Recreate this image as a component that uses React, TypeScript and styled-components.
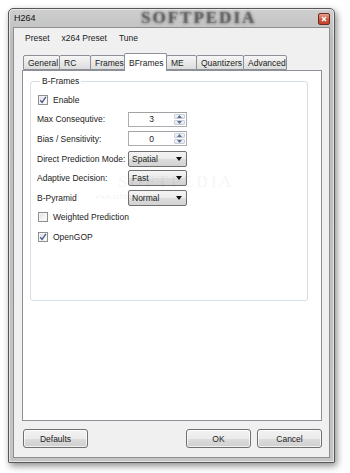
import React from "react";
import styled, { createGlobalStyle } from "styled-components";

const GlobalStyle = createGlobalStyle`
  html, body { margin: 0; padding: 0; background: #ffffff; }
  body {
    font-family: "Liberation Sans", Arial, sans-serif;
    font-size: 8.5px;
    color: #1b1b1b;
  }
  * { box-sizing: border-box; }
`;

const Page = styled.div`
  width: 350px;
  height: 473px;
  padding: 8px 0 0 8px;
  overflow: hidden;
`;

const Window = styled.div`
  width: 327px;
  height: 455px;
  border: 1px solid #575757;
  border-radius: 5px 5px 1px 1px;
  background: linear-gradient(#cfcfcf, #bdbdbd 30px, #c4c4c4);
  box-shadow: 2px 3px 7px rgba(0, 0, 0, 0.45), inset 0 0 0 1px rgba(255,255,255,0.55);
  padding: 0 4px 4px 4px;
  display: flex;
  flex-direction: column;
`;

const TitleBar = styled.div`
  position: relative;
  height: 18px;
  display: flex;
  align-items: center;
  padding-left: 1px;
  font-size: 9px;
  color: #111;
  overflow: hidden;
`;

const TitleWatermark = styled.span`
  position: absolute;
  left: 128px;
  top: -1px;
  font-family: "Liberation Serif", serif;
  font-weight: bold;
  font-size: 17px;
  letter-spacing: 2px;
  color: rgba(70, 70, 70, 0.3);
  text-shadow: 0 0 3px rgba(40, 40, 40, 0.8);
`;

const CloseButton = styled.div`
  position: absolute;
  right: 0;
  top: 4px;
  width: 12px;
  height: 12px;
  border: 1px solid #6b2b22;
  border-radius: 2px;
  background: linear-gradient(#e8a190, #d2553c 55%, #c0442c);
  display: flex;
  align-items: center;
  justify-content: center;
`;

const Client = styled.div`
  flex: 1;
  background: #f0f0f0;
  border: 1px solid #8e8e8e;
  display: flex;
  flex-direction: column;
  position: relative;
`;

const MenuBar = styled.div`
  height: 19px;
  display: flex;
  align-items: center;
  gap: 12px;
  padding-left: 11px;
`;

const MenuItem = styled.span``;

const TabStrip = styled.div`
  margin: 6px 0 0 8px;
  height: 17px;
  display: flex;
  align-items: flex-end;
  padding-left: 1px;
  position: relative;
  z-index: 1;
`;

const Tab = styled.div<{ $w: number; $active?: boolean }>`
  width: ${(p) => p.$w}px;
  height: ${(p) => (p.$active ? 18 : 15)}px;
  margin-left: -1px;
  margin-bottom: ${(p) => (p.$active ? -1 : 0)}px;
  padding: ${(p) => (p.$active ? "1px" : "0")} 0 0 4px;
  border: 1px solid #8d9096;
  border-bottom: ${(p) => (p.$active ? "none" : "1px solid #8d9096")};
  border-radius: 2px 2px 0 0;
  background: ${(p) =>
    p.$active ? "#ffffff" : "linear-gradient(#f6f6f6, #e9e9e9 50%, #dcdcdc)"};
  display: flex;
  align-items: center;
  white-space: nowrap;
  position: relative;
  z-index: ${(p) => (p.$active ? 2 : 1)};
  &:first-child { margin-left: 0; }
`;

const Panel = styled.div`
  margin: 0 7px 0 8px;
  height: 351px;
  background: #ffffff;
  border: 1px solid #8d9096;
  padding: 5px 13px 0 7px;
  position: relative;
`;

const Group = styled.fieldset`
  margin: 0;
  height: 225px;
  border: 1px solid #d5dfe5;
  border-radius: 3px;
  padding: 3px 0 0 6px;
`;

const Legend = styled.legend`
  margin-left: 3px;
  padding: 0 2px;
  line-height: 11px;
`;

const Rows = styled.div`
  display: flex;
  flex-direction: column;
`;

const Row = styled.div`
  height: 19.6px;
  display: flex;
  align-items: center;
`;

const Label = styled.span`
  width: 91px;
  white-space: nowrap;
`;

const CheckRow = styled(Row)`
  gap: 5px;
  padding-left: 1px;
`;

const CheckBox = styled.span`
  width: 10px;
  height: 10px;
  border: 1px solid #8e8f8f;
  background: linear-gradient(135deg, #dcdcdc, #f6f6f6 60%, #ffffff);
  box-shadow: inset 0 0 0 1px #f4f4f4;
  display: flex;
  align-items: center;
  justify-content: center;
`;

const SpinBox = styled.div`
  width: 59px;
  height: 15px;
  border: 1px solid #abadb3;
  border-top-color: #a0a2a8;
  background: #ffffff;
  display: flex;
  align-items: stretch;
`;

const SpinText = styled.span`
  flex: 1;
  display: flex;
  align-items: center;
  justify-content: center;
`;

const SpinButtons = styled.div`
  width: 12px;
  display: flex;
  flex-direction: column;
  gap: 1px;
  padding: 1px 1px 1px 0;
`;

const SpinButton = styled.div`
  flex: 1;
  border: 1px solid #c9d0da;
  border-radius: 1px;
  background: linear-gradient(#f5f7fa, #e1e6ee);
  display: flex;
  align-items: center;
  justify-content: center;
`;

const Combo = styled.div`
  width: 59px;
  height: 16px;
  border: 1px solid #707070;
  border-radius: 2px;
  background: linear-gradient(#f4f4f4, #ebebeb 50%, #dddddd 51%, #d2d2d2);
  display: flex;
  align-items: center;
  justify-content: space-between;
  padding: 0 4px 0 3px;
`;

const Arrow = styled.span`
  width: 0;
  height: 0;
  border-left: 3.5px solid transparent;
  border-right: 3.5px solid transparent;
  border-top: 4px solid #111;
`;

const ButtonBar = styled.div`
  margin: 8px 7px 0 9px;
  display: flex;
  gap: 6px;
`;

const Spacer = styled.div`
  flex: 1;
`;

const PushButton = styled.div`
  width: 65px;
  height: 19px;
  border: 1px solid #707070;
  border-radius: 3px;
  background: linear-gradient(#f2f2f2, #ebebeb 50%, #dddddd 51%, #cfcfcf);
  box-shadow: inset 0 0 0 1px rgba(255, 255, 255, 0.7);
  display: flex;
  align-items: center;
  justify-content: center;
`;

const Watermark = styled.div`
  position: absolute;
  left: 95px;
  top: 101px;
  font-family: "Liberation Serif", serif;
  font-weight: bold;
  font-size: 17px;
  letter-spacing: 2px;
  color: rgba(0, 0, 0, 0.05);
  pointer-events: none;
`;

const WatermarkUrl = styled.div`
  position: absolute;
  left: 72px;
  top: 121px;
  font-family: "Liberation Serif", serif;
  font-size: 7.5px;
  color: rgba(0, 0, 0, 0.09);
  pointer-events: none;
`;

const Check = () => (
  <svg width="8" height="8" viewBox="0 0 8 8">
    <path d="M1.2 4.2 L3.1 6.4 L6.9 0.9" fill="none" stroke="#4a5d92" strokeWidth="1.4" />
  </svg>
);

const SpinArrow = ({ up }: { up?: boolean }) => (
  <svg width="5" height="3" viewBox="0 0 5 3">
    <path d={up ? "M0 3 L2.5 0 L5 3 Z" : "M0 0 L2.5 3 L5 0 Z"} fill="#5a6e92" />
  </svg>
);

const tabs: { name: string; w: number; active?: boolean }[] = [
  { name: "General", w: 37 },
  { name: "RC", w: 32 },
  { name: "Frames", w: 35 },
  { name: "BFrames", w: 43, active: true },
  { name: "ME", w: 31 },
  { name: "Quantizers", w: 48 },
  { name: "Advanced", w: 44 },
];

const Spin = ({ value }: { value: string }) => (
  <SpinBox>
    <SpinText>{value}</SpinText>
    <SpinButtons>
      <SpinButton>
        <SpinArrow up />
      </SpinButton>
      <SpinButton>
        <SpinArrow />
      </SpinButton>
    </SpinButtons>
  </SpinBox>
);

export default function App() {
  return (
    <>
      <GlobalStyle />
      <Page>
        <Window>
          <TitleBar>
            H264
            <TitleWatermark>SOFTPEDIA</TitleWatermark>
            <CloseButton>
              <svg width="6" height="6" viewBox="0 0 6 6">
                <path d="M1 1 L5 5 M5 1 L1 5" stroke="#fff" strokeWidth="1.5" />
              </svg>
            </CloseButton>
          </TitleBar>
          <Client>
            <MenuBar>
              <MenuItem>Preset</MenuItem>
              <MenuItem>x264 Preset</MenuItem>
              <MenuItem>Tune</MenuItem>
            </MenuBar>
            <TabStrip>
              {tabs.map((t) => (
                <Tab key={t.name} $w={t.w} $active={t.active}>
                  {t.name}
                </Tab>
              ))}
            </TabStrip>
            <Panel>
              <Group>
                <Legend>B-Frames</Legend>
                <Rows>
                  <CheckRow>
                    <CheckBox>
                      <Check />
                    </CheckBox>
                    Enable
                  </CheckRow>
                  <Row>
                    <Label>Max Consequtive:</Label>
                    <Spin value="3" />
                  </Row>
                  <Row>
                    <Label>Bias / Sensitivity:</Label>
                    <Spin value="0" />
                  </Row>
                  <Row>
                    <Label>Direct Prediction Mode:</Label>
                    <Combo>
                      Spatial
                      <Arrow />
                    </Combo>
                  </Row>
                  <Row>
                    <Label>Adaptive Decision:</Label>
                    <Combo>
                      Fast
                      <Arrow />
                    </Combo>
                  </Row>
                  <Row>
                    <Label>B-Pyramid</Label>
                    <Combo>
                      Normal
                      <Arrow />
                    </Combo>
                  </Row>
                  <CheckRow>
                    <CheckBox />
                    Weighted Prediction
                  </CheckRow>
                  <CheckRow>
                    <CheckBox>
                      <Check />
                    </CheckBox>
                    OpenGOP
                  </CheckRow>
                </Rows>
              </Group>
              <Watermark>SOFTPEDIA</Watermark>
              <WatermarkUrl>www.softpedia.com</WatermarkUrl>
            </Panel>
            <ButtonBar>
              <PushButton>Defaults</PushButton>
              <Spacer />
              <PushButton>OK</PushButton>
              <PushButton>Cancel</PushButton>
            </ButtonBar>
          </Client>
        </Window>
      </Page>
    </>
  );
}
